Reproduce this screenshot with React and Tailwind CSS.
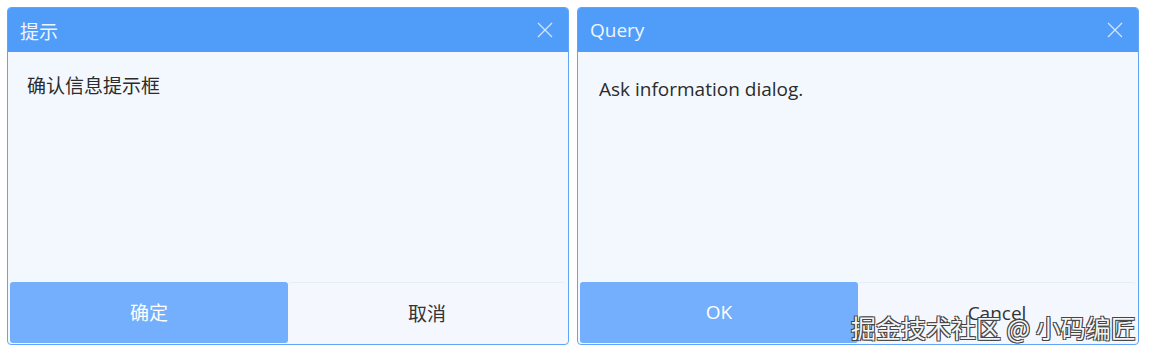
const cjk = { fontFamily: '"Noto Sans CJK SC", "Noto Sans", sans-serif' };
const latin = { fontFamily: '"Open Sans", "Noto Sans CJK SC", sans-serif' };

function CloseIcon() {
  return (
    <svg width="16" height="16" viewBox="0 0 16 16" className="shrink-0">
      <path d="M1 1 L15 15 M15 1 L1 15" stroke="#d6e7fd" strokeWidth="1.2" fill="none" />
    </svg>
  );
}

function Dialog({ title, text, ok, cancel, font, bodyPad }) {
  return (
    <div className="w-[562px] h-[338px] flex flex-col border border-[#62a5f7] rounded-[4px] bg-[#f3f8fe] overflow-hidden">
      <div className="h-[44px] bg-[#509cf9] flex items-center justify-between pl-[12px] pr-[15px]">
        <span className="text-[19px] text-[#eef5ff] leading-none" style={font}>
          {title}
        </span>
        <CloseIcon />
      </div>
      <div className={"flex-1 text-[19px] text-[#2b2b2b] " + bodyPad} style={font}>
        {text}
      </div>
      <div className="flex px-[2px] pb-[1px]">
        <button
          className="flex-1 h-[61px] rounded-[3px] bg-[#73affd] text-white text-[19px] flex items-center justify-center"
          style={font}
        >
          {ok}
        </button>
        <button
          className="flex-1 h-[61px] rounded-[3px] border-t border-[#e5edf8] bg-[#f4f8fe] text-[#333] text-[19px] flex items-center justify-center"
          style={font}
        >
          {cancel}
        </button>
      </div>
    </div>
  );
}

export default function App() {
  return (
    <div className="relative w-[1150px] h-[359px] bg-white flex gap-[8px] pl-[7px] pt-[7px]">
      <Dialog title="提示" text="确认信息提示框" ok="确定" cancel="取消" font={cjk} bodyPad="pl-[19px] pt-[19px]" />
      <Dialog
        title="Query"
        text="Ask information dialog."
        ok="OK"
        cancel="Cancel"
        font={latin}
        bodyPad="pl-[21px] pt-[23px]"
      />
      <div
        className="absolute left-[851px] top-[315px] text-[25px] leading-none text-[#f4f4f4] whitespace-nowrap"
        style={{
          ...cjk,
          textShadow:
            "1px 1px 0 #444, -1px -1px 0 #444, 1px -1px 0 #444, -1px 1px 0 #444",
        }}
      >
        掘金技术社区 @ 小码编匠
      </div>
    </div>
  );
}
